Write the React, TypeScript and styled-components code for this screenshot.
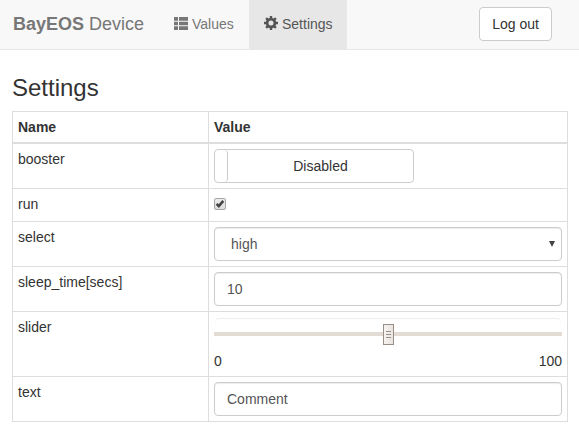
import React from 'react';
import styled, { createGlobalStyle } from 'styled-components';

const GlobalStyle = createGlobalStyle`
  *, *::before, *::after { box-sizing: border-box; }
  body {
    margin: 0;
    background: #fff;
    color: #333;
    font: 14px/20px "Liberation Sans", Arial, sans-serif;
  }
`;

const Navbar = styled.nav`
  display: flex;
  align-items: stretch;
  height: 50px;
  padding-left: 13px;
  padding-right: 27px;
  background: #f8f8f8;
  border-bottom: 1px solid #e7e7e7;
`;

const Brand = styled.div`
  width: 145px;
  padding-top: 14px;
  font-size: 18px;
  color: #777;
  white-space: nowrap;
`;

const NavItem = styled.a<{ $active?: boolean }>`
  display: flex;
  gap: 4px;
  width: ${(p) => (p.$active ? 98 : 91)}px;
  padding: 14px 0 0 ${(p) => (p.$active ? 15 : 16)}px;
  color: ${(p) => (p.$active ? '#555' : '#777')};
  background: ${(p) => (p.$active ? '#e7e7e7' : 'transparent')};
  svg { flex: none; margin-top: 2px; }
`;

const LogoutButton = styled.button`
  width: 73px;
  height: 34px;
  margin: 7px 0 0 auto;
  padding: 0;
  border: 1px solid #ccc;
  border-radius: 4px;
  background: #fff;
  color: #333;
  font: inherit;
`;

const Content = styled.main`
  padding: 25px 11px 0 12px;
`;

const Title = styled.h3`
  margin: 0 0 10px;
  font-size: 24px;
  font-weight: 400;
  line-height: 26px;
`;

const Table = styled.div`
  border: 1px solid #ddd;
  border-bottom: 0;
`;

const Row = styled.div<{ $height: number; $head?: boolean }>`
  display: grid;
  grid-template-columns: 196px 1fr;
  height: ${(p) => p.$height}px;
  border-bottom: ${(p) => (p.$head ? 2 : 1)}px solid #ddd;
  font-weight: ${(p) => (p.$head ? 700 : 400)};
`;

const Cell = styled.div`
  padding: 5px;
  &:first-child { border-right: 1px solid #ddd; }
`;

const Toggle = styled.div`
  display: flex;
  width: 200px;
  height: 34px;
  border: 1px solid #ccc;
  border-radius: 4px;
  overflow: hidden;
`;

const ToggleHandle = styled.span`
  width: 13px;
  border-right: 1px solid #ccc;
  border-radius: 0 4px 4px 0;
`;

const ToggleLabel = styled.span`
  flex: 1;
  padding-top: 6px;
  text-align: center;
`;

const CheckMark = styled.svg`
  display: block;
  margin-top: 4px;
`;

const Field = styled.div<{ $indent?: number }>`
  display: flex;
  justify-content: space-between;
  height: 34px;
  padding: 6px 6px 0 ${(p) => p.$indent ?? 12}px;
  border: 1px solid #ccc;
  border-radius: 4px;
  box-shadow: inset 0 1px 1px rgba(0, 0, 0, 0.075);
  color: #555;
  svg { margin-top: 7px; }
`;

const SliderTrack = styled.div`
  height: 34px;
  padding: 1px 1px 2px;
  background: linear-gradient(#e2dcd5, #e2dcd5) 0 15px / 100% 4px no-repeat;
`;

const SliderBox = styled.div`
  display: flex;
  align-items: center;
  justify-content: center;
  height: 31px;
  border-radius: 4px;
  box-shadow: inset 0 1px 1px rgba(0, 0, 0, 0.075);
`;

const SliderThumb = styled.div`
  display: flex;
  flex-direction: column;
  align-items: center;
  justify-content: center;
  gap: 2px;
  width: 11px;
  height: 21px;
  margin: 2px 0 0 1px;
  border: 1px solid #989088;
  background: linear-gradient(90deg, #f6f3f0, #e9e4df);
`;

const Grip = styled.i`
  width: 5px;
  height: 1px;
  background: #989088;
`;

const Scale = styled.div`
  display: flex;
  justify-content: space-between;
`;

const ListIcon = () => (
  <svg width="14" height="14" viewBox="0 0 14 14" fill="currentColor">
    <path d="M0 1h4v3.7H0zM5 1h9v3.7H5zM0 5.8h4v3.5H0zM5 5.8h9v3.5H5zM0 10.3h4V14H0zM5 10.3h9V14H5z" />
  </svg>
);

const CogIcon = () => (
  <svg width="14" height="14" viewBox="0 0 14 14">
    <path
      d="M7 0v2.5M7 11.5V14M0 7h2.5M11.5 7H14M2.1 2.1l1.8 1.8M10.1 10.1l1.8 1.8M11.9 2.1l-1.8 1.8M3.9 10.1l-1.8 1.8"
      stroke="currentColor"
      strokeWidth="2.4"
    />
    <circle cx="7" cy="7" r="3.9" fill="none" stroke="currentColor" strokeWidth="2.8" />
  </svg>
);

const Checkbox = () => (
  <CheckMark width="12" height="12" viewBox="0 0 12 12" role="img" aria-label="checked">
    <defs>
      <linearGradient id="box" x2="0" y2="1">
        <stop stopColor="#eee" />
        <stop offset="1" stopColor="#ddd" />
      </linearGradient>
    </defs>
    <rect x=".5" y=".5" width="11" height="11" rx="1.5" fill="url(#box)" stroke="#a6a6a6" />
    <path d="M2.6 5.9l2.2 2.2L9.3 2.8" fill="none" stroke="#444" strokeWidth="2.6" />
  </CheckMark>
);

export default function App() {
  return (
    <>
      <GlobalStyle />
      <Navbar>
        <Brand><b>BayEOS</b> Device</Brand>
        <NavItem><ListIcon />Values</NavItem>
        <NavItem $active><CogIcon />Settings</NavItem>
        <LogoutButton>Log out</LogoutButton>
      </Navbar>
      <Content>
        <Title>Settings</Title>
        <Table>
          <Row $height={32} $head><Cell>Name</Cell><Cell>Value</Cell></Row>
          <Row $height={45}>
            <Cell>booster</Cell>
            <Cell><Toggle><ToggleHandle /><ToggleLabel>Disabled</ToggleLabel></Toggle></Cell>
          </Row>
          <Row $height={33}><Cell>run</Cell><Cell><Checkbox /></Cell></Row>
          <Row $height={45}>
            <Cell>select</Cell>
            <Cell>
              <Field $indent={16}>
                high
                <svg width="6" height="6" viewBox="0 0 6 6"><path d="M0 0h6L3 6z" fill="#444" /></svg>
              </Field>
            </Cell>
          </Row>
          <Row $height={45}><Cell>sleep_time[secs]</Cell><Cell><Field>10</Field></Cell></Row>
          <Row $height={65}>
            <Cell>slider</Cell>
            <Cell>
              <SliderTrack>
                <SliderBox><SliderThumb><Grip /><Grip /><Grip /></SliderThumb></SliderBox>
              </SliderTrack>
              <Scale><span>0</span><span>100</span></Scale>
            </Cell>
          </Row>
          <Row $height={45}><Cell>text</Cell><Cell><Field>Comment</Field></Cell></Row>
        </Table>
      </Content>
    </>
  );
}
